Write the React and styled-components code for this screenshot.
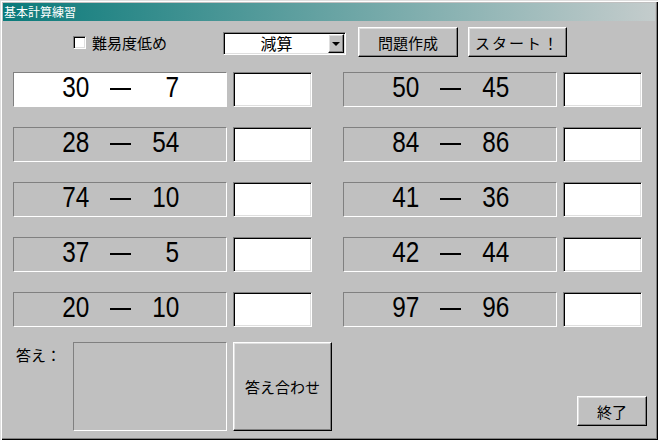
import React from "react";
import styled, { createGlobalStyle } from "styled-components";

const GlobalStyle = createGlobalStyle`
	html, body {
		margin: 0;
		padding: 0;
		background: #c0c0c0;
	}
	body {
		font-family: "Noto Sans CJK JP", "Liberation Sans", sans-serif;
	}
`;

const Window = styled.div`
	box-sizing: border-box;
	width: 658px;
	height: 440px;
	padding: 3px;
	background: #c0c0c0;
	box-shadow: inset 1px 1px #dfdfdf, inset 2px 2px #fff, inset -1px -1px #000,
		inset -2px -2px #808080;
	display: flex;
	flex-direction: column;
`;

const TitleBar = styled.div`
	height: 18px;
	padding-left: 1px;
	display: flex;
	align-items: center;
	background: linear-gradient(to right, #0a7a7a, #c4cccc);
	color: #fff;
	font-size: 12px;
	line-height: 18px;
`;

const Body = styled.div`
	flex: 1;
	display: flex;
	flex-direction: column;
	padding: 6px 8px 0 10px;
`;

const Toolbar = styled.div`
	height: 30px;
	display: flex;
	align-items: center;
	padding-left: 60px;
`;

const CheckGroup = styled.label`
	width: 150px;
	display: flex;
	align-items: center;
	gap: 6px;
	font-size: 15px;
	color: #000;
`;

const sunken = `
	box-sizing: border-box;
	border: 1px solid;
	border-color: #808080 #fff #fff #808080;
	box-shadow: inset 1px 1px #000, inset -1px -1px #dfdfdf;
	background: #fff;
`;

const thinSunken = `
	box-sizing: border-box;
	border: 1px solid;
	border-color: #808080 #fff #fff #808080;
`;

const raised = `
	box-sizing: border-box;
	border: 1px solid;
	border-color: #fff #000 #000 #fff;
	box-shadow: inset -1px -1px #808080, inset 1px 1px #dfdfdf;
	background: #c0c0c0;
`;

const CheckBox = styled.span`
	${sunken}
	width: 13px;
	height: 13px;
	flex: none;
`;

const Combo = styled.div`
	${sunken}
	width: 123px;
	height: 23px;
	display: flex;
	padding: 1px;
	margin-top: 2px;
`;

const ComboText = styled.div`
	flex: 1;
	display: flex;
	align-items: center;
	justify-content: center;
	font-size: 16px;
	line-height: 1;
`;

const DropButton = styled.div`
	${raised}
	width: 16px;
	display: flex;
	align-items: center;
	justify-content: center;

	&::after {
		content: "";
		border-left: 4px solid transparent;
		border-right: 4px solid transparent;
		border-top: 4px solid #000;
		margin-top: 1px;
	}
`;

const Button = styled.button`
	${raised}
	width: ${(p) => p.$w}px;
	height: ${(p) => p.$h}px;
	margin-left: ${(p) => p.$ml || 0}px;
	padding: 0;
	font-family: "Noto Sans CJK JP", sans-serif;
	font-size: 15px;
	color: #000;
	display: flex;
	align-items: center;
	justify-content: center;
	letter-spacing: ${(p) => p.$ls || 0}px;
`;

const ProblemGrid = styled.div`
	display: grid;
	grid-template-columns: 299px 299px;
	column-gap: 31px;
	row-gap: 20px;
	margin-top: 15px;
`;

const Problem = styled.div`
	display: flex;
	gap: 6px;
	height: 35px;
`;

const ExprBox = styled.div`
	${thinSunken}
	width: 214px;
	background: ${(p) => (p.$active ? "#fff" : "#c0c0c0")};
	display: grid;
	grid-template-columns: 28px 62px 28px;
	justify-content: center;
	align-items: center;
	padding-bottom: 5px;
	font-family: "Liberation Sans", sans-serif;
	font-size: 29px;
	line-height: 1;
	color: #000;
`;

const Num = styled.span`
	justify-self: end;
	display: inline-block;
	transform: scaleX(0.84);
	transform-origin: right center;
	white-space: nowrap;
`;

const Minus = styled.span`
	justify-self: center;
	width: 21px;
	height: 2px;
	background: #000;
	margin-top: 3px;
`;

const AnswerBox = styled.div`
	${sunken}
	width: 79px;
`;

const Bottom = styled.div`
	display: flex;
	margin-top: 15px;
	height: 89px;
`;

const AnswerLabel = styled.div`
	width: 57px;
	padding: 4px 0 0 3px;
	font-size: 15px;
	line-height: 18px;
`;

const ResultBox = styled.div`
	${thinSunken}
	width: 154px;
	margin-right: 6px;
`;

const EndButton = styled(Button)`
	margin-left: auto;
	align-self: flex-end;
	margin-bottom: 5px;
`;

const problems = [
	[30, 7],
	[50, 45],
	[28, 54],
	[84, 86],
	[74, 10],
	[41, 36],
	[37, 5],
	[42, 44],
	[20, 10],
	[97, 96],
];

export default function App() {
	return (
		<>
			<GlobalStyle />
			<Window>
				<TitleBar>基本計算練習</TitleBar>
				<Body>
					<Toolbar>
						<CheckGroup>
							<CheckBox />
							難易度低め
						</CheckGroup>
						<Combo>
							<ComboText>減算</ComboText>
							<DropButton />
						</Combo>
						<Button $w={100} $h={30} $ml={12}>
							問題作成
						</Button>
						<Button $w={99} $h={30} $ml={10} $ls={2}>
							スタート！
						</Button>
					</Toolbar>
					<ProblemGrid>
						{problems.map(([a, b], i) => (
							<Problem key={i}>
								<ExprBox $active={i === 0}>
									<Num>{a}</Num>
									<Minus />
									<Num>{b}</Num>
								</ExprBox>
								<AnswerBox />
							</Problem>
						))}
					</ProblemGrid>
					<Bottom>
						<AnswerLabel>答え：</AnswerLabel>
						<ResultBox />
						<Button $w={99} $h={89}>
							答え合わせ
						</Button>
						<EndButton $w={70} $h={30}>
							終了
						</EndButton>
					</Bottom>
				</Body>
			</Window>
		</>
	);
}
